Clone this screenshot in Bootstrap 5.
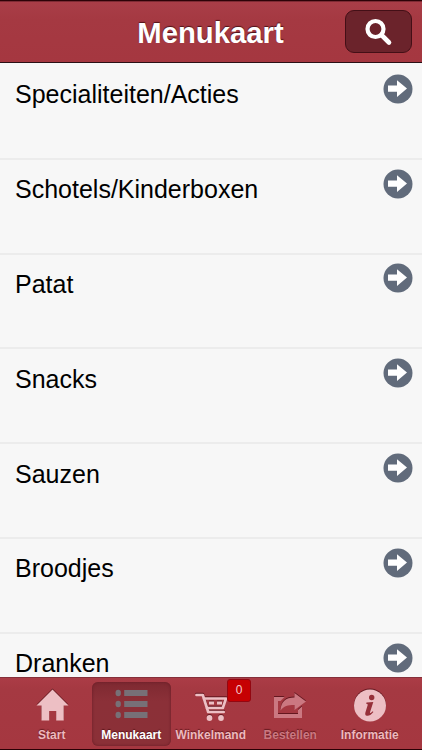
<!DOCTYPE html>
<html lang="nl">
<head>
<meta charset="utf-8">
<meta name="viewport" content="width=device-width, initial-scale=1">
<title>Menukaart</title>
<link href="https://cdn.jsdelivr.net/npm/bootstrap@5.3.0/dist/css/bootstrap.min.css" rel="stylesheet">
<style>
body{font-family:"Liberation Sans",Arial,sans-serif;background:#f7f7f7;color:#000}
.app-bar{height:63px;background:linear-gradient(#a93e48,#a53942 30%,#a53740);border-top:1px solid #2c0207;border-bottom:1px solid #2a1015;box-shadow:inset 0 1px #7d2a33;z-index:2}
.bar-side{width:76px}
.app-title{font-size:29.3px;line-height:34px;font-weight:700;color:#fff;text-shadow:0 -1px 1px rgba(50,5,10,.75);padding-top:2px}
.search-btn{width:67px;height:43px;background:#6b232b;border:1px solid #430f16;border-radius:9px;margin-right:10px}
.menu-list{min-height:0;padding-top:2.100px}
.menu-row{height:94.8px;flex:none;border-bottom:2px solid #ececec;font-size:25px;line-height:30px;padding:14.300px 9px 0 15px}
.menu-row svg{margin-top:-5.500px}
.tab-bar{height:73px;background:linear-gradient(#ab3c46,#a53942 15%,#a53740);border-top:1px solid #85303a;border-bottom:1px solid #2a0005;padding:4px 12px 3px}
.tab{flex:0 0 79.5px;height:64px;border-radius:6px;color:#edb9be;font-size:12px;line-height:14px;font-weight:700;text-shadow:0 -1px 1px rgba(70,10,15,.65);padding-top:3px;white-space:nowrap;text-decoration:none}
.tab svg{filter:drop-shadow(0 -1px .5px rgba(65,5,12,.65));margin-bottom:3px}
.tab-on{background:linear-gradient(#7e2931,#8b3038 30%,#8b3037);box-shadow:inset 0 0 3px #661c25;color:#fff}
.tab-on svg{filter:none}
.tab-dim{color:#cb7881}
.count{left:56px;top:-3px;width:24px;height:23px;background:#c60003;border:1px solid #930711;border-radius:3px;color:#f3c9cb;font-size:12px;line-height:21px;font-weight:400;text-shadow:none}
</style>
<script src="https://cdn.jsdelivr.net/npm/bootstrap@5.3.0/dist/js/bootstrap.bundle.min.js"></script>
</head>
<body class="vh-100 overflow-hidden d-flex flex-column">
<svg class="d-none"><defs>
<symbol id="go" viewBox="0 0 30 30"><circle cx="15" cy="15" r="14.5" fill="#616b7b"/><path d="M5 11.500h9V6.300l10 8.300-10 8.300v-5.200H5z" fill="#fff"/></symbol></defs></svg>
<header class="app-bar flex-shrink-0 d-grid position-relative align-items-center">
  <div class="d-flex align-items-center">
    <div class="bar-side"></div>
    <h1 class="app-title flex-fill text-center mb-0">Menukaart</h1>
    <button class="search-btn p-0 d-flex align-items-center justify-content-center" aria-label="Zoeken"><svg width="30" height="30" viewBox="0 0 30 30" fill="none" stroke="#fff"><circle cx="11.500" cy="12" r="8" stroke-width="4.200"/><path d="M17.500 18l7.500 7.500" stroke-width="4.600" stroke-linecap="round"/></svg></button>
  </div>
</header>
<main class="menu-list flex-fill overflow-hidden d-flex flex-column">
  <div class="menu-row d-flex justify-content-between align-items-start"><span>Specialiteiten/Acties</span><svg width="30" height="30"><use href="#go"/></svg></div>
  <div class="menu-row d-flex justify-content-between align-items-start"><span>Schotels/Kinderboxen</span><svg width="30" height="30"><use href="#go"/></svg></div>
  <div class="menu-row d-flex justify-content-between align-items-start"><span>Patat</span><svg width="30" height="30"><use href="#go"/></svg></div>
  <div class="menu-row d-flex justify-content-between align-items-start"><span>Snacks</span><svg width="30" height="30"><use href="#go"/></svg></div>
  <div class="menu-row d-flex justify-content-between align-items-start"><span>Sauzen</span><svg width="30" height="30"><use href="#go"/></svg></div>
  <div class="menu-row d-flex justify-content-between align-items-start"><span>Broodjes</span><svg width="30" height="30"><use href="#go"/></svg></div>
  <div class="menu-row d-flex justify-content-between align-items-start"><span>Dranken</span><svg width="30" height="30"><use href="#go"/></svg></div>
</main>
<nav class="tab-bar flex-shrink-0 d-flex">
  <a class="tab d-flex flex-column align-items-center"><svg width="40" height="40" viewBox="0 0 40 40" fill="#edbfc4"><path d="M20.500 4.500L36.500 20.500h-4.800V35.500h-7.500V26h-7v9.500H9.500V20.500H4.500z"/></svg>Start</a>
  <a class="tab tab-on d-flex flex-column align-items-center"><svg width="40" height="40" viewBox="0 0 40 40" fill="#777077"><ellipse cx="7.200" cy="8" rx="2.700" ry="3.200"/><ellipse cx="7.200" cy="19" rx="2.700" ry="3.200"/><ellipse cx="7.200" cy="30" rx="2.700" ry="3.200"/><path d="M13.200 5H36.500v6H13.200zM13.200 16H36.500v6H13.200zM13.200 27H36.500v6H13.200z"/></svg>Menukaart</a>
  <a class="tab position-relative d-flex flex-column align-items-center"><svg width="40" height="40" viewBox="0 0 40 40"><g fill="none" stroke="#edbfc4" stroke-width="2.700" stroke-linecap="round" stroke-linejoin="round"><path d="M5.500 10h6.300l5.400 17h15.500"/><path d="M13 13.500h22l-3.200 9.500H16"/></g><path d="M18 18h5m3 0h5" stroke="#edbfc4" stroke-width="2.800"/><circle cx="18.500" cy="33" r="2.900" fill="#edbfc4"/><circle cx="30" cy="33" r="2.900" fill="#edbfc4"/></svg>Winkelmand<span class="count position-absolute text-center">0</span></a>
  <a class="tab tab-dim d-flex flex-column align-items-center"><svg width="40" height="40" viewBox="0 0 40 40" fill="#cb7881"><path d="M4 12h10.500l-4 4H8v13h20v-4l4-3.500V33H4z"/><path d="M10.500 25.500c.5-9 5-13 14-13V8l11.500 8.500L24.500 25v-5c-7 0-10.500 1-14 5.500z"/></svg>Bestellen</a>
  <a class="tab d-flex flex-column align-items-center"><svg width="40" height="40" viewBox="0 0 40 40"><circle cx="20" cy="20.500" r="16" fill="#edbfc4"/><g fill="#963039"><circle cx="21.700" cy="12.500" r="2.700"/><path d="M16.500 17.500l6.800-.6-3.200 10.200c-.4 1.400.6 1.300 2.600-.8l.7.700c-2.700 3.500-4.800 4-6.500 3.700-1.600-.3-2-1.600-1.500-3.300l2.300-7.300c.2-.9-.2-1.200-1.500-1.400z"/></g></svg>Informatie</a>
</nav>
</body>
</html>
